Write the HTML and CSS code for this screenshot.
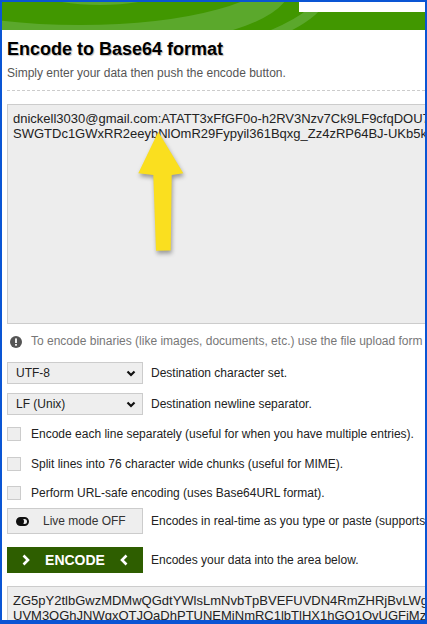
FILE: index.html
```html
<!DOCTYPE html>
<html lang="en">
<head>
    <meta charset="UTF-8">
    <meta name="viewport" content="width=device-width, initial-scale=1.0">
    <title>Encode to Base64 format</title>
    <link rel="stylesheet" href="styles.css">
</head>
<body>
    <div class="frame">
        <div class="banner">
            <svg class="banner-art" width="423" height="28" viewBox="2 2 423 28">
                <rect x="2" y="2" width="423" height="28" fill="#419700"/>
                <ellipse cx="80" cy="-18" rx="200" ry="55" fill="none" stroke="#5ba82c" stroke-width="24"/>
                <ellipse cx="80" cy="-20" rx="250" ry="85" fill="none" stroke="#5ba82c" stroke-width="9"/>
                <ellipse cx="100" cy="-30" rx="90" ry="33" fill="none" stroke="#5ba82c" stroke-width="4"/>
            </svg>
            <div class="search"></div>
        </div>

        <div class="main">
            <div class="intro">
                <h1 class="title">Encode to Base64 format</h1>
                <p class="lead">Simply enter your data then push the encode button.</p>
            </div>

            <div class="input-wrap">
                <textarea class="data input" wrap="off" readonly>dnickell3030@gmail.com:ATATT3xFfGF0o-h2RV3Nzv7Ck9LF9cfqDOU7tQxZ
SWGTDc1GWxRR2eeybNlOmR29Fypyil361Bqxg_Zz4zRP64BJ-UKb5kU8wq</textarea>
                <!-- big yellow arrow pasted over the input -->
                <svg class="arrow" width="52" height="124" viewBox="0 0 52 124">
                    <polygon points="23.3,1.7 48.3,43.3 36.7,45 35.7,120.5 21,120.7 18.3,45 3.3,43.3" fill="#fadf1f"/>
                </svg>
            </div>

            <p class="note">
                <svg class="note-icon" width="12" height="12" viewBox="0 0 12 12">
                    <circle cx="6" cy="6" r="6" fill="#555"/>
                    <rect x="5.1" y="2.4" width="1.8" height="4.6" fill="#fff"/>
                    <rect x="5.1" y="8" width="1.8" height="1.7" fill="#fff"/>
                </svg>
                <span>To encode binaries (like images, documents, etc.) use the file upload form a little further down on this page.</span>
            </p>

            <div class="row sel-row first">
                <div class="select">
                    <span>UTF-8</span>
                    <svg width="10" height="7" viewBox="0 0 10 7"><polyline points="1.5,1.5 5,5 8.5,1.5" fill="none" stroke="#111" stroke-width="2.2"/></svg>
                </div>
                <span class="label">Destination character set.</span>
            </div>
            <div class="row sel-row">
                <div class="select">
                    <span>LF (Unix)</span>
                    <svg width="10" height="7" viewBox="0 0 10 7"><polyline points="1.5,1.5 5,5 8.5,1.5" fill="none" stroke="#111" stroke-width="2.2"/></svg>
                </div>
                <span class="label">Destination newline separator.</span>
            </div>

            <div class="row check-row cb1">
                <span class="check"></span>
                <span class="label">Encode each line separately (useful for when you have multiple entries).</span>
            </div>
            <div class="row check-row cb2">
                <span class="check"></span>
                <span class="label">Split lines into 76 character wide chunks (useful for MIME).</span>
            </div>
            <div class="row check-row cb3">
                <span class="check"></span>
                <span class="label">Perform URL-safe encoding (uses Base64URL format).</span>
            </div>

            <div class="row btn-row live-row">
                <button class="btn live">
                    <svg width="13" height="9" viewBox="0 0 13 9">
                        <rect x="1" y="1" width="11" height="7" rx="3.5" fill="none" stroke="#111" stroke-width="2"/>
                        <circle cx="4.5" cy="4.5" r="3.5" fill="#111"/>
                    </svg>
                    <span>Live mode OFF</span>
                </button>
                <span class="label">Encodes in real-time as you type or paste (supports only the UTF-8 character set).</span>
            </div>

            <div class="row btn-row encode-row">
                <button class="btn encode">
                    <svg width="8" height="12" viewBox="0 0 8 12"><polyline points="1.5,1.5 6,6 1.5,10.5" fill="none" stroke="#fff" stroke-width="2.6"/></svg>
                    <span>ENCODE</span>
                    <svg width="8" height="12" viewBox="0 0 8 12"><polyline points="6.5,1.5 2,6 6.5,10.5" fill="none" stroke="#fff" stroke-width="2.6"/></svg>
                </button>
                <span class="label">Encodes your data into the area below.</span>
            </div>

            <textarea class="data output" wrap="off" readonly>ZG5pY2tlbGwzMDMwQGdtYWlsLmNvbTpBVEFUVDN4RmZHRjBvLWgyUlYzTnp2N0NrOUxGOWNmcURPVTd0
UVM3OGhJNWgxQTJOaDhPTUNEMiNmRC1lbTlHX1hGQ1QvUGFiMzMxQnF4Z19aejR6UlA2NEJKLVVLYjVrVQ==</textarea>
        </div>
    </div>
</body>
</html>
```

FILE: styles.css
```css
body {
    margin: 0;
    font-family: "Liberation Sans", Arial, sans-serif;
    color: #222;
}

.frame {
    width: 427px;
    height: 624px;
    box-sizing: border-box;
    border: solid #0a55d4;
    border-width: 2px 2px 4px 2px;
    overflow: hidden;
    background: #fff;
}

.banner {
    position: relative;
    height: 28px;
}
.banner-art {
    display: block;
}
.search {
    position: absolute;
    top: 0;
    right: 0;
    width: 126px;
    height: 10px;
    background: #fff;
}

.main {
    padding-left: 5px;
}

.intro {
    padding-bottom: 9px;
    border-bottom: 1px dashed #ccc;
}
.title {
    margin: 8px 0 0;
    font-size: 18px;
    line-height: 22px;
    font-weight: bold;
    color: #000;
    text-shadow: 1px 1px 1px #bbb;
}
.lead {
    margin: 6px 0 0;
    font-size: 12px;
    line-height: 15px;
    color: #555;
}

.input-wrap {
    position: relative;
    margin-top: 13px;
}
.data {
    display: block;
    box-sizing: border-box;
    width: 720px;
    margin: 0;
    padding: 6px 5px;
    font-family: "Liberation Sans", Arial, sans-serif;
    font-size: 13px;
    line-height: 15px;
    color: #222;
    background: #ededed;
    border: 1px solid #ccc;
    border-radius: 0;
    resize: none;
    overflow: hidden;
    white-space: pre;
}
.input {
    height: 220px;
}
.output {
    height: 90px;
    margin-top: 13px;
}
.arrow {
    position: absolute;
    left: 128px;
    top: 26px;
    filter: drop-shadow(1px 3px 2px rgba(0, 0, 0, 0.35));
}

.note {
    display: flex;
    align-items: center;
    gap: 9px;
    margin: 10px 0 0;
    font-size: 12px;
    line-height: 15px;
    color: #777;
    white-space: nowrap;
}
.note-icon {
    margin-left: 3px;
    flex-shrink: 0;
}

.row {
    display: flex;
    align-items: center;
    white-space: nowrap;
    font-size: 12px;
}
.label {
    color: #222;
}

.sel-row {
    height: 22px;
    margin-top: 9px;
    gap: 8px;
}
.sel-row.first {
    margin-top: 13px;
}
.select {
    flex-shrink: 0;
    box-sizing: border-box;
    width: 136px;
    height: 22px;
    padding: 0 6px 0 8px;
    display: flex;
    align-items: center;
    justify-content: space-between;
    background: #eee;
    border: 1px solid #ccc;
    color: #222;
}

.check-row {
    height: 22px;
    gap: 10px;
}
.cb1, .cb2 {
    margin-top: 8px;
}
.cb3 {
    margin-top: 7px;
}
.check {
    flex-shrink: 0;
    box-sizing: border-box;
    width: 14px;
    height: 14px;
    background: #eee;
    border: 1px solid #ccc;
}

.btn-row {
    height: 26px;
    gap: 8px;
}
.live-row {
    margin-top: 4px;
}
.encode-row {
    margin-top: 13px;
}
.btn {
    flex-shrink: 0;
    box-sizing: border-box;
    width: 136px;
    height: 26px;
    margin: 0;
    display: flex;
    align-items: center;
    font-family: "Liberation Sans", Arial, sans-serif;
    border-radius: 0;
    cursor: pointer;
}
.live {
    padding: 0 0 0 8px;
    gap: 14px;
    font-size: 12px;
    color: #333;
    background: #eee;
    border: 1px solid #ccc;
}
.encode {
    padding: 0 15px;
    justify-content: space-between;
    font-size: 14px;
    font-weight: bold;
    color: #fff;
    background: #2e5e00;
    border: none;
}
```
